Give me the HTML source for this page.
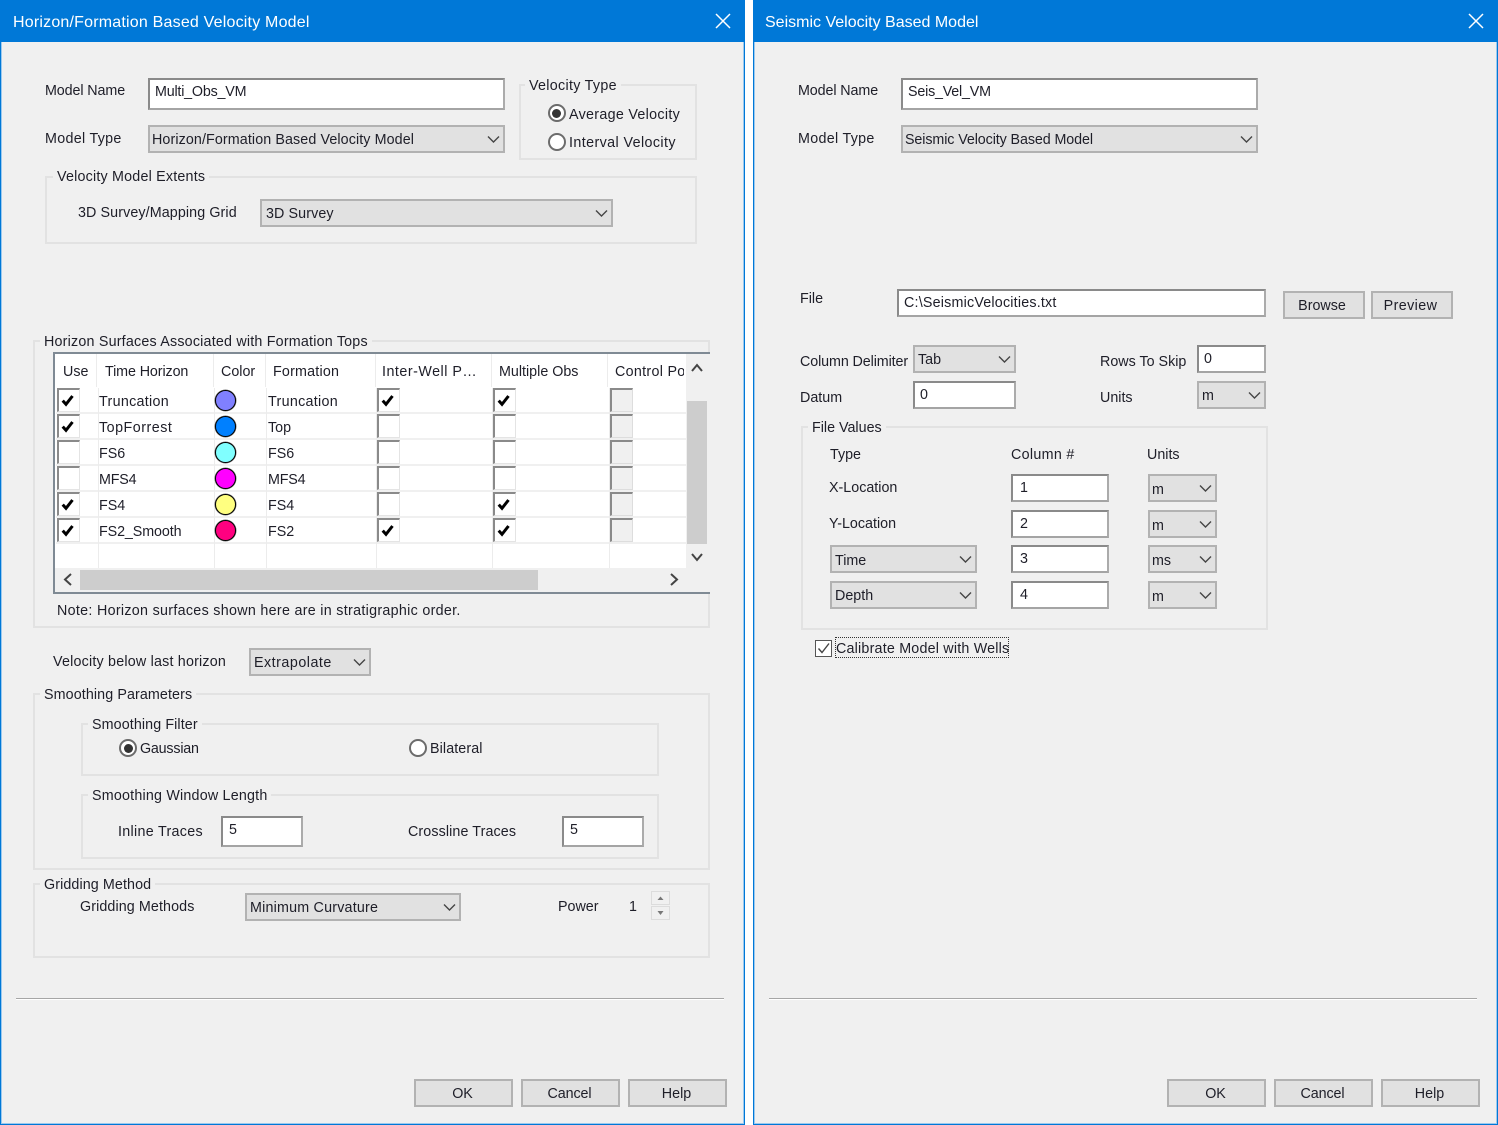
<!DOCTYPE html>
<html><head><meta charset="utf-8"><title>Velocity Models</title>
<style>
html,body{margin:0;padding:0;background:#fff}
body{position:relative;width:1498px;height:1125px;overflow:hidden;font-family:"Liberation Sans",sans-serif;font-size:14.3px;color:#1e1e28}
div,span,svg{box-sizing:border-box}
.d{position:absolute;top:0;width:745px;height:1125px;background:#f0f0f0;border:1px solid #0078d7;border-top:0;box-shadow:inset 0 0 0 1px #9cc9ee}
.tb{position:absolute;top:0;width:745px;height:42px;background:#0078d7}
.tt{position:absolute;top:13px;line-height:20px;color:#fff;font-size:16px;white-space:nowrap}
.t{position:absolute;line-height:20px;height:20px;white-space:nowrap;margin-top:2px}
.g{position:absolute;border:2px solid #e2e2e2}
.l{position:absolute;line-height:20px;height:20px;white-space:nowrap;background:#f0f0f0;padding:0 4px;margin-left:-4px;margin-top:2px}
.u{margin-top:1px}
.i{position:absolute;background:#fff;border:2px solid #8a8a8a;border-right-color:#ababab;border-bottom-color:#a4a4a4;line-height:20px;padding:2px 0 0 5px;white-space:nowrap}
.c{position:absolute;background:#e1e1e1;border:2px solid #b2b2b2;line-height:22px;padding:2px 0 0 2px;white-space:nowrap}
.c svg{position:absolute;right:3px;top:6px;width:13px;height:12px}
.b{position:absolute;background:#e1e1e1;border:2px solid #b2b2b2;text-align:center;line-height:27px;height:28px;padding-right:2px}
.r{position:absolute;width:18px;height:18px;border-radius:50%;background:#fff;border:2px solid #6c6c6c}
.r.on::after{content:"";position:absolute;left:2.5px;top:2.5px;width:9px;height:9px;border-radius:50%;background:#333}
.s{position:absolute;height:2px;background:#a6a6a6;border-bottom:1px solid #fff}
.cb{position:absolute;width:23px;height:24px;background:#fff;border-top:2px solid #8a8a8a;border-left:2px solid #8a8a8a;border-right:1px solid #e4e4e4;border-bottom:1px solid #e4e4e4}
.cb.x{background:#f0f0f0;border-right-color:#ddd;border-bottom-color:#ddd}
.cb svg{position:absolute;left:2px;top:5px;width:13px;height:12px}
.hl{position:absolute;left:56px;width:630px;height:2px;background:#f0f0f0}
.vl{position:absolute;top:388px;height:180px;width:1px;background:#ececec}
.vh{position:absolute;top:354px;height:33px;width:1px;background:#ececec}
.o{position:absolute;width:21px;height:21px;border-radius:50%;border:1px solid #000;box-shadow:0 0 0 .5px rgba(0,0,0,.55)}
.a1{letter-spacing:.1px}.a2{letter-spacing:.2px}.a3{letter-spacing:.3px}.a4{letter-spacing:.4px}.a5{letter-spacing:.5px}.m1{letter-spacing:-.1px}.m2{letter-spacing:-.2px}
</style></head><body>
<svg width="0" height="0" style="position:absolute">
<symbol id="ch" viewBox="0 0 13 12"><path d="M1 3.5 L6.5 9 L12 3.5" fill="none" stroke="#444" stroke-width="1.4"/></symbol>
<symbol id="ck" viewBox="0 0 13 12"><path d="M1.7 5.6 L5 9.3 L11.5 1" fill="none" stroke="#000" stroke-width="3"/></symbol>
</svg>

<!-- LEFT DIALOG -->
<div class="d" style="left:0"></div>
<div class="tb" style="left:0"></div>
<div class="tt" style="left:13px;letter-spacing:.2px">Horizon/Formation Based Velocity Model</div>
<svg style="position:absolute;left:715px;top:13px" width="16" height="16" viewBox="0 0 16 16"><path d="M1 1 L15 15 M15 1 L1 15" stroke="#fff" stroke-width="1.5" fill="none"/></svg>

<div class="t m1 u" style="left:45px;top:80px">Model Name</div>
<div class="i m2" style="left:148px;top:78px;width:357px;height:32px">Multi_Obs_VM</div>
<div class="t a3 u" style="left:45px;top:128px">Model Type</div>
<div class="c a1" style="left:148px;top:125px;width:357px;height:28px">Horizon/Formation Based Velocity Model<svg><use href="#ch"/></svg></div>

<div class="g" style="left:519px;top:84px;width:178px;height:76px"></div>
<div class="l a3 u" style="left:529px;top:75px">Velocity Type</div>
<div class="r on" style="left:547.5px;top:104px"></div>
<div class="t a3" style="left:569px;top:103px">Average Velocity</div>
<div class="r" style="left:547.5px;top:133px"></div>
<div class="t a4 u" style="left:569px;top:132px">Interval Velocity</div>

<div class="g" style="left:45px;top:176px;width:652px;height:68px"></div>
<div class="l a2 u" style="left:57px;top:166px">Velocity Model Extents</div>
<div class="t a1" style="left:78px;top:201px">3D Survey/Mapping Grid</div>
<div class="c a1" style="left:260px;top:199px;width:353px;height:28px;padding-left:4px">3D Survey<svg><use href="#ch"/></svg></div>

<div class="g" style="left:33px;top:340px;width:677px;height:288px"></div>
<div class="l a2" style="left:44px;top:330px">Horizon Surfaces Associated with Formation Tops</div>
<div style="position:absolute;left:53px;top:352px;width:657px;height:242px;background:#fff;border:2px solid #7f8a94;border-right:0"></div>
<div class="vh" style="left:96px"></div><div class="vh" style="left:213px"></div><div class="vh" style="left:265px"></div><div class="vh" style="left:375px"></div><div class="vh" style="left:491px"></div><div class="vh" style="left:607px"></div>
<div class="t" style="left:63px;top:360px">Use</div>
<div class="t m1" style="left:105px;top:360px">Time Horizon</div>
<div class="t" style="left:221px;top:360px">Color</div>
<div class="t a2" style="left:273px;top:360px">Formation</div>
<div class="t a5" style="left:382px;top:360px">Inter-Well P…</div>
<div class="t" style="left:499px;top:360px">Multiple Obs</div>
<div class="t a3" style="left:615px;top:360px;width:69px;overflow:hidden">Control Point</div>
<div class="hl" style="top:412px"></div><div class="hl" style="top:438px"></div><div class="hl" style="top:464px"></div><div class="hl" style="top:490px"></div><div class="hl" style="top:516px"></div><div class="hl" style="top:542px"></div>
<div class="vl" style="left:98px"></div><div class="vl" style="left:214px"></div><div class="vl" style="left:266px"></div><div class="vl" style="left:376px"></div><div class="vl" style="left:492px"></div><div class="vl" style="left:609px"></div>

<div class="t a3" style="left:99px;top:390px">Truncation</div><div class="t a3" style="left:268px;top:390px">Truncation</div>
<div class="t a5" style="left:99px;top:416px">TopForrest</div><div class="t" style="left:268px;top:416px">Top</div>
<div class="t" style="left:99px;top:442px">FS6</div><div class="t" style="left:268px;top:442px">FS6</div>
<div class="t m2" style="left:99px;top:468px">MFS4</div><div class="t m2" style="left:268px;top:468px">MFS4</div>
<div class="t" style="left:99px;top:494px">FS4</div><div class="t" style="left:268px;top:494px">FS4</div>
<div class="t m1" style="left:99px;top:520px">FS2_Smooth</div><div class="t" style="left:268px;top:520px">FS2</div>

<div class="o" style="left:215px;top:390px;background:#8080ff"></div>
<div class="o" style="left:215px;top:416px;background:#0080ff"></div>
<div class="o" style="left:215px;top:442px;background:#80ffff"></div>
<div class="o" style="left:215px;top:468px;background:#ff00ff"></div>
<div class="o" style="left:215px;top:494px;background:#ffff80"></div>
<div class="o" style="left:215px;top:520px;background:#ff0080"></div>

<div class="cb" style="left:57px;top:388px"><svg><use href="#ck"/></svg></div>
<div class="cb" style="left:57px;top:414px"><svg><use href="#ck"/></svg></div>
<div class="cb" style="left:57px;top:440px"></div>
<div class="cb" style="left:57px;top:466px"></div>
<div class="cb" style="left:57px;top:492px"><svg><use href="#ck"/></svg></div>
<div class="cb" style="left:57px;top:518px"><svg><use href="#ck"/></svg></div>

<div class="cb" style="left:377px;top:388px"><svg><use href="#ck"/></svg></div>
<div class="cb" style="left:377px;top:414px"></div>
<div class="cb" style="left:377px;top:440px"></div>
<div class="cb" style="left:377px;top:466px"></div>
<div class="cb" style="left:377px;top:492px"></div>
<div class="cb" style="left:377px;top:518px"><svg><use href="#ck"/></svg></div>

<div class="cb" style="left:493px;top:388px"><svg><use href="#ck"/></svg></div>
<div class="cb" style="left:493px;top:414px"></div>
<div class="cb" style="left:493px;top:440px"></div>
<div class="cb" style="left:493px;top:466px"></div>
<div class="cb" style="left:493px;top:492px"><svg><use href="#ck"/></svg></div>
<div class="cb" style="left:493px;top:518px"><svg><use href="#ck"/></svg></div>

<div class="cb x" style="left:610px;top:388px"></div>
<div class="cb x" style="left:610px;top:414px"></div>
<div class="cb x" style="left:610px;top:440px"></div>
<div class="cb x" style="left:610px;top:466px"></div>
<div class="cb x" style="left:610px;top:492px"></div>
<div class="cb x" style="left:610px;top:518px"></div>

<!-- scrollbars -->
<div style="position:absolute;left:686px;top:354px;width:24px;height:214px;background:#f0f0f0"></div>
<div style="position:absolute;left:687px;top:401px;width:20px;height:143px;background:#cdcdcd"></div>
<div style="position:absolute;left:55px;top:568px;width:655px;height:24px;background:#f0f0f0"></div>
<div style="position:absolute;left:80px;top:570px;width:458px;height:20px;background:#cdcdcd"></div>
<svg style="position:absolute;left:0;top:0;overflow:visible" width="1" height="1"><g fill="none" stroke="#444" stroke-width="2"><path d="M692 371 L697 365 L702 371"/><path d="M692 554 L697 560 L702 554"/><path d="M71 574 L65 579.5 L71 585"/><path d="M671 574 L677 579.5 L671 585"/></g></svg>

<div class="t a3" style="left:57px;top:599px">Note: Horizon surfaces shown here are in stratigraphic order.</div>

<div class="t a2" style="left:53px;top:650px">Velocity below last horizon</div>
<div class="c a5" style="left:249px;top:648px;width:122px;height:28px;padding-left:3px">Extrapolate<svg style="right:3px"><use href="#ch"/></svg></div>

<div class="g" style="left:33px;top:693px;width:677px;height:177px"></div>
<div class="l a1" style="left:44px;top:683px">Smoothing Parameters</div>
<div class="g" style="left:81px;top:723px;width:578px;height:53px"></div>
<div class="l a1" style="left:92px;top:713px">Smoothing Filter</div>
<div class="r on" style="left:119px;top:739px"></div>
<div class="t m2 u" style="left:140px;top:738px">Gaussian</div>
<div class="r" style="left:409px;top:739px"></div>
<div class="t a1 u" style="left:430px;top:738px">Bilateral</div>
<div class="g" style="left:81px;top:794px;width:578px;height:65px"></div>
<div class="l a2" style="left:92px;top:784px">Smoothing Window Length</div>
<div class="t a3" style="left:118px;top:820px">Inline Traces</div>
<div class="i" style="left:221px;top:816px;width:82px;height:31px;padding-left:6px">5</div>
<div class="t a1" style="left:408px;top:820px">Crossline Traces</div>
<div class="i" style="left:562px;top:816px;width:82px;height:31px;padding-left:6px">5</div>

<div class="g" style="left:33px;top:883px;width:677px;height:75px"></div>
<div class="l a1" style="left:44px;top:873px">Gridding Method</div>
<div class="t a1" style="left:80px;top:895px">Gridding Methods</div>
<div class="c a2" style="left:245px;top:893px;width:216px;height:28px;padding-left:3px">Minimum Curvature<svg><use href="#ch"/></svg></div>
<div class="t" style="left:558px;top:895px">Power</div>
<div class="t" style="left:629px;top:895px">1</div>
<div style="position:absolute;left:651px;top:891px;width:19px;height:14px;background:#f0f0f0;border:1px solid #dcdcdc"></div>
<div style="position:absolute;left:651px;top:906px;width:19px;height:14px;background:#f0f0f0;border:1px solid #dcdcdc"></div>
<svg style="position:absolute;left:651px;top:891px" width="19" height="29"><path d="M6.5 9 L9.5 5.5 L12.5 9 Z M6.5 20 L9.5 24 L12.5 20 Z" fill="#777"/></svg>

<div class="s" style="left:16px;top:998px;width:708px"></div>
<div class="b m1" style="left:414px;top:1079px;width:99px">OK</div>
<div class="b m1" style="left:521px;top:1079px;width:99px">Cancel</div>
<div class="b" style="left:628px;top:1079px;width:99px">Help</div>

<!-- RIGHT DIALOG -->
<div class="d" style="left:753px"></div>
<div class="tb" style="left:753px"></div>
<div class="tt" style="left:765px">Seismic Velocity Based Model</div>
<svg style="position:absolute;left:1468px;top:13px" width="16" height="16" viewBox="0 0 16 16"><path d="M1 1 L15 15 M15 1 L1 15" stroke="#fff" stroke-width="1.5" fill="none"/></svg>

<div class="t m1 u" style="left:798px;top:80px">Model Name</div>
<div class="i m2" style="left:901px;top:78px;width:357px;height:32px">Seis_Vel_VM</div>
<div class="t a3 u" style="left:798px;top:128px">Model Type</div>
<div class="c m1" style="left:901px;top:125px;width:357px;height:28px">Seismic Velocity Based Model<svg><use href="#ch"/></svg></div>

<div class="t" style="left:800px;top:287px">File</div>
<div class="i a2" style="left:897px;top:289px;width:369px;height:28px">C:\SeismicVelocities.txt</div>
<div class="b" style="left:1283px;top:291px;width:82px;padding-right:4px">Browse</div>
<div class="b a4" style="left:1371px;top:291px;width:82px;padding-right:3px">Preview</div>

<div class="t m1" style="left:800px;top:350px">Column Delimiter</div>
<div class="c" style="left:913px;top:345px;width:103px;height:28px;padding:2px 0 0 3px">Tab<svg><use href="#ch"/></svg></div>
<div class="t" style="left:1100px;top:350px">Rows To Skip</div>
<div class="i" style="left:1197px;top:345px;width:69px;height:28px">0</div>
<div class="t" style="left:800px;top:386px">Datum</div>
<div class="i" style="left:913px;top:381px;width:103px;height:28px">0</div>
<div class="t" style="left:1100px;top:386px">Units</div>
<div class="c" style="left:1197px;top:381px;width:69px;height:28px;padding-left:3px">m<svg><use href="#ch"/></svg></div>

<div class="g" style="left:801px;top:426px;width:467px;height:204px"></div>
<div class="l" style="left:812px;top:416px">File Values</div>
<div class="t" style="left:830px;top:443px">Type</div>
<div class="t a3" style="left:1011px;top:443px">Column #</div>
<div class="t" style="left:1147px;top:443px">Units</div>

<div class="t" style="left:829px;top:476px">X-Location</div>
<div class="i" style="left:1011px;top:474px;width:98px;height:28px;padding-left:7px">1</div>
<div class="c" style="left:1148px;top:474px;width:69px;height:28px;padding:3px 0 0 2px">m<svg><use href="#ch"/></svg></div>
<div class="t" style="left:829px;top:512px">Y-Location</div>
<div class="i" style="left:1011px;top:510px;width:98px;height:28px;padding-left:7px">2</div>
<div class="c" style="left:1148px;top:510px;width:69px;height:28px;padding:3px 0 0 2px">m<svg><use href="#ch"/></svg></div>
<div class="c" style="left:830px;top:545px;width:147px;height:28px;padding:3px 0 0 3px">Time<svg><use href="#ch"/></svg></div>
<div class="i" style="left:1011px;top:545px;width:98px;height:28px;padding-left:7px">3</div>
<div class="c" style="left:1148px;top:545px;width:69px;height:28px;padding:3px 0 0 2px">ms<svg><use href="#ch"/></svg></div>
<div class="c" style="left:830px;top:581px;width:147px;height:28px;padding-left:3px">Depth<svg><use href="#ch"/></svg></div>
<div class="i" style="left:1011px;top:581px;width:98px;height:28px;padding-left:7px">4</div>
<div class="c" style="left:1148px;top:581px;width:69px;height:28px;padding:3px 0 0 2px">m<svg><use href="#ch"/></svg></div>

<div style="position:absolute;left:815px;top:640px;width:17px;height:17px;background:#fff;border:1.5px solid #555"></div>
<svg style="position:absolute;left:815px;top:640px" width="17" height="17"><path d="M3.5 8.5 L7 12.5 L14 3.5" fill="none" stroke="#444" stroke-width="1.4"/></svg>
<div class="t a2" style="left:835px;top:635px;width:174px;height:21px;line-height:24px;outline:1px dotted #333;outline-offset:-1px;padding-left:1px">Calibrate Model with Wells</div>

<div class="s" style="left:769px;top:998px;width:708px"></div>
<div class="b m1" style="left:1167px;top:1079px;width:99px">OK</div>
<div class="b m1" style="left:1274px;top:1079px;width:99px">Cancel</div>
<div class="b" style="left:1381px;top:1079px;width:99px">Help</div>
</body></html>
